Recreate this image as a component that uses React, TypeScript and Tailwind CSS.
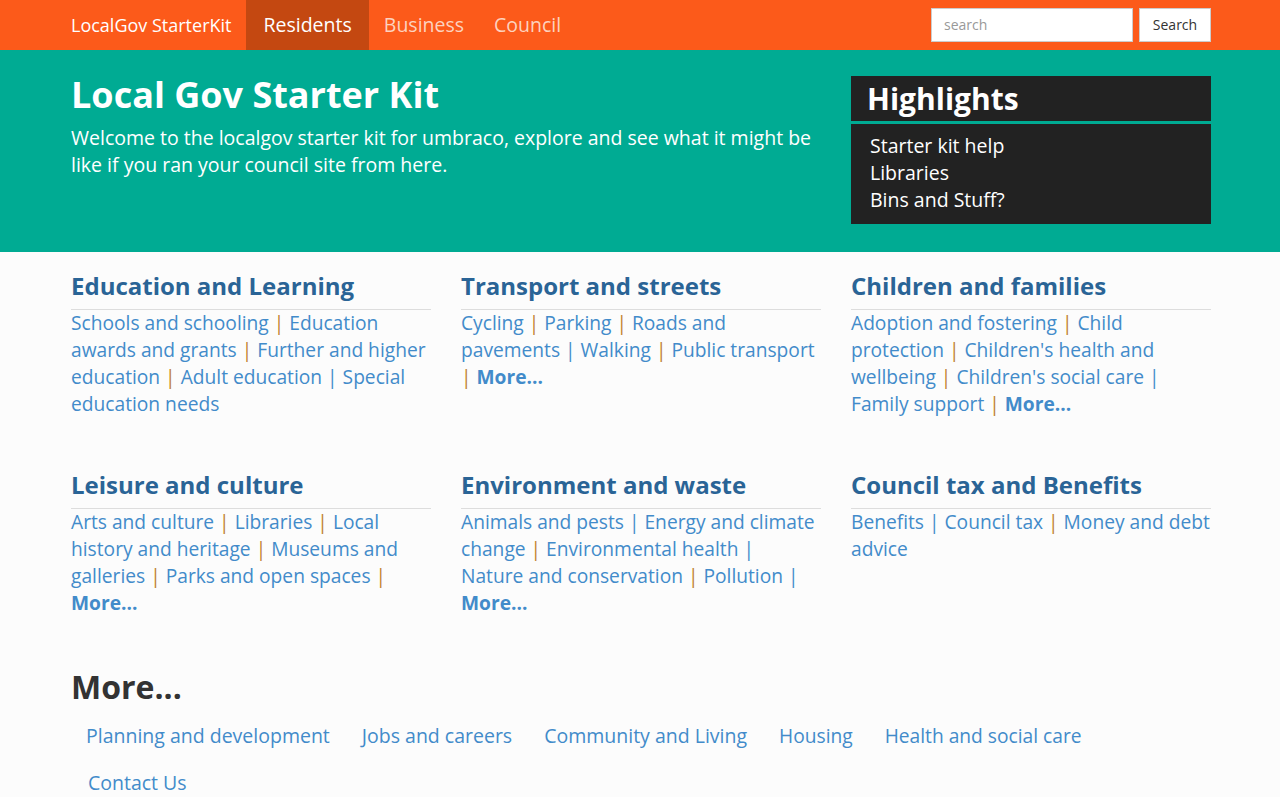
import React from "react";

type Item = { label: string; sep?: "o" | "b" };

const OPEN = "font-['Open_Sans',sans-serif]";
const NAV = "font-['Open_Sans',sans-serif] [font-stretch:92%]";
const LEAD = "font-['Open_Sans',sans-serif] [font-stretch:88%]";
const PILL = "font-['Open_Sans',sans-serif] [font-stretch:90%]";
const TITLE = "font-['Open_Sans',sans-serif] [font-stretch:94%]";

const sections: { title: string; items: Item[]; more?: boolean }[] = [
  {
    title: "Education and Learning",
    items: [
      { label: "Schools and schooling", sep: "o" },
      { label: "Education awards and grants", sep: "o" },
      { label: "Further and higher education", sep: "o" },
      { label: "Adult education", sep: "b" },
      { label: "Special education needs" },
    ],
  },
  {
    title: "Transport and streets",
    items: [
      { label: "Cycling", sep: "o" },
      { label: "Parking", sep: "o" },
      { label: "Roads and pavements", sep: "b" },
      { label: "Walking", sep: "o" },
      { label: "Public transport", sep: "o" },
    ],
    more: true,
  },
  {
    title: "Children and families",
    items: [
      { label: "Adoption and fostering", sep: "o" },
      { label: "Child protection", sep: "o" },
      { label: "Children's health and wellbeing", sep: "o" },
      { label: "Children's social care", sep: "b" },
      { label: "Family support", sep: "o" },
    ],
    more: true,
  },
  {
    title: "Leisure and culture",
    items: [
      { label: "Arts and culture", sep: "o" },
      { label: "Libraries", sep: "o" },
      { label: "Local history and heritage", sep: "o" },
      { label: "Museums and galleries", sep: "o" },
      { label: "Parks and open spaces", sep: "o" },
    ],
    more: true,
  },
  {
    title: "Environment and waste",
    items: [
      { label: "Animals and pests", sep: "b" },
      { label: "Energy and climate change", sep: "o" },
      { label: "Environmental health", sep: "b" },
      { label: "Nature and conservation", sep: "o" },
      { label: "Pollution", sep: "b" },
    ],
    more: true,
  },
  {
    title: "Council tax and Benefits",
    items: [
      { label: "Benefits", sep: "b" },
      { label: "Council tax", sep: "o" },
      { label: "Money and debt advice" },
    ],
  },
];

function Sep({ kind }: { kind: "o" | "b" }) {
  return <span className={kind === "o" ? "text-[#c0802e]" : "text-[#428bca]"}> | </span>;
}

function Section({ s }: { s: (typeof sections)[number] }) {
  return (
    <div className="min-h-[199px]">
      <h2 className={`${OPEN} text-[24px] font-bold leading-[30px] text-[#2a6496] pb-[8px] border-b border-[#dddddd]`}>
        {s.title}
      </h2>
      <p className={`${OPEN} text-[19.2px] leading-[27px] text-[#428bca] mt-[-1px]`}>
        {s.items.map((it, i) => (
          <React.Fragment key={i}>
            <a href="#">{it.label}</a>
            {it.sep && <Sep kind={it.sep} />}
          </React.Fragment>
        ))}
        {s.more && (
          <a href="#" className="font-bold">
            More...
          </a>
        )}
      </p>
    </div>
  );
}

export default function App() {
  const moreLinks: { label: string; cond: boolean }[] = [
    { label: "Planning and development", cond: true },
    { label: "Jobs and careers", cond: true },
    { label: "Community and Living", cond: true },
    { label: "Housing", cond: false },
    { label: "Health and social care", cond: false },
    { label: "Contact Us", cond: true },
  ];

  return (
    <div className="min-h-[797px] bg-[#fcfcfc]">
      {/* top navigation */}
      <nav className="h-[50px] bg-[#fc5a1a]">
        <div className="mx-auto w-[1170px] pl-[16px] pr-[14px] flex items-center h-full">
          <a href="#" className={`${NAV} text-[18px] text-white pr-[15px] leading-[50px]`}>
            LocalGov StarterKit
          </a>
          <a href="#" className={`${NAV} text-[19.5px] text-white bg-[#c44811] px-[17px] leading-[50px]`}>
            Residents
          </a>
          <a href="#" className={`${NAV} text-[19.5px] text-[#fdd2bf] px-[15px] leading-[50px]`}>
            Business
          </a>
          <a href="#" className={`${NAV} text-[19.5px] text-[#fdd2bf] px-[15px] leading-[50px]`}>
            Council
          </a>
          <div className="ml-auto flex items-center gap-[6px] pb-[1px]">
            <input
              placeholder="search"
              className={`${OPEN} w-[202px] h-[34px] bg-white border border-[#cccccc] px-[12px] text-[14px] text-[#555] placeholder:text-[#999] outline-none`}
            />
            <button className={`${OPEN} w-[72px] h-[34px] bg-white border border-[#cccccc] text-[14px] text-[#333]`}>
              Search
            </button>
          </div>
        </div>
      </nav>

      {/* hero */}
      <header className="bg-[#00ab93] h-[202px]">
        <div className="mx-auto w-[1170px] pl-[16px] pr-[14px] grid grid-cols-[750px_1fr] gap-[30px] pt-[26px]">
          <div>
            <h1 className={`${TITLE} text-[36px] font-bold leading-[42px] text-white mt-[-2px]`}>
              Local Gov Starter Kit
            </h1>
            <p className={`${LEAD} text-[19.5px] leading-[27px] text-white mt-[8px]`}>
              Welcome to the localgov starter kit for umbraco, explore and see what it might be like if you ran your
              council site from here.
            </p>
          </div>
          <aside className="w-[360px] justify-self-end">
            <h3 className={`${OPEN} bg-[#222222] text-white text-[30px] font-bold leading-[45px] px-[16px]`}>
              Highlights
            </h3>
            <ul className={`${OPEN} bg-[#222222] text-white text-[19.5px] leading-[27px] mt-[3px] px-[19px] pt-[8px] pb-[11px]`}>
              <li>Starter kit help</li>
              <li>Libraries</li>
              <li>Bins and Stuff?</li>
            </ul>
          </aside>
        </div>
      </header>

      {/* service sections */}
      <main className="mx-auto w-[1170px] pl-[16px] pr-[14px] pt-[19px]">
        <div className="grid grid-cols-3 gap-x-[30px]">
          {sections.map((s) => (
            <Section key={s.title} s={s} />
          ))}
        </div>

        <h2 className={`${OPEN} text-[32px] font-bold text-[#333333] leading-[40px] mt-[-2px]`}>More...</h2>
        <ul className="flex flex-wrap mt-[5px] w-[1140px]">
          {moreLinks.map((l) => (
            <li key={l.label} className={l.label === "Contact Us" ? "ml-[2px]" : "mr-[2px]"}>
              <a
                href="#"
                className={`${l.cond ? PILL + " text-[19.5px]" : OPEN + " text-[19.2px]"} block px-[15px] py-[10px] leading-[27px] text-[#428bca]`}
              >
                {l.label}
              </a>
            </li>
          ))}
        </ul>
      </main>
    </div>
  );
}
